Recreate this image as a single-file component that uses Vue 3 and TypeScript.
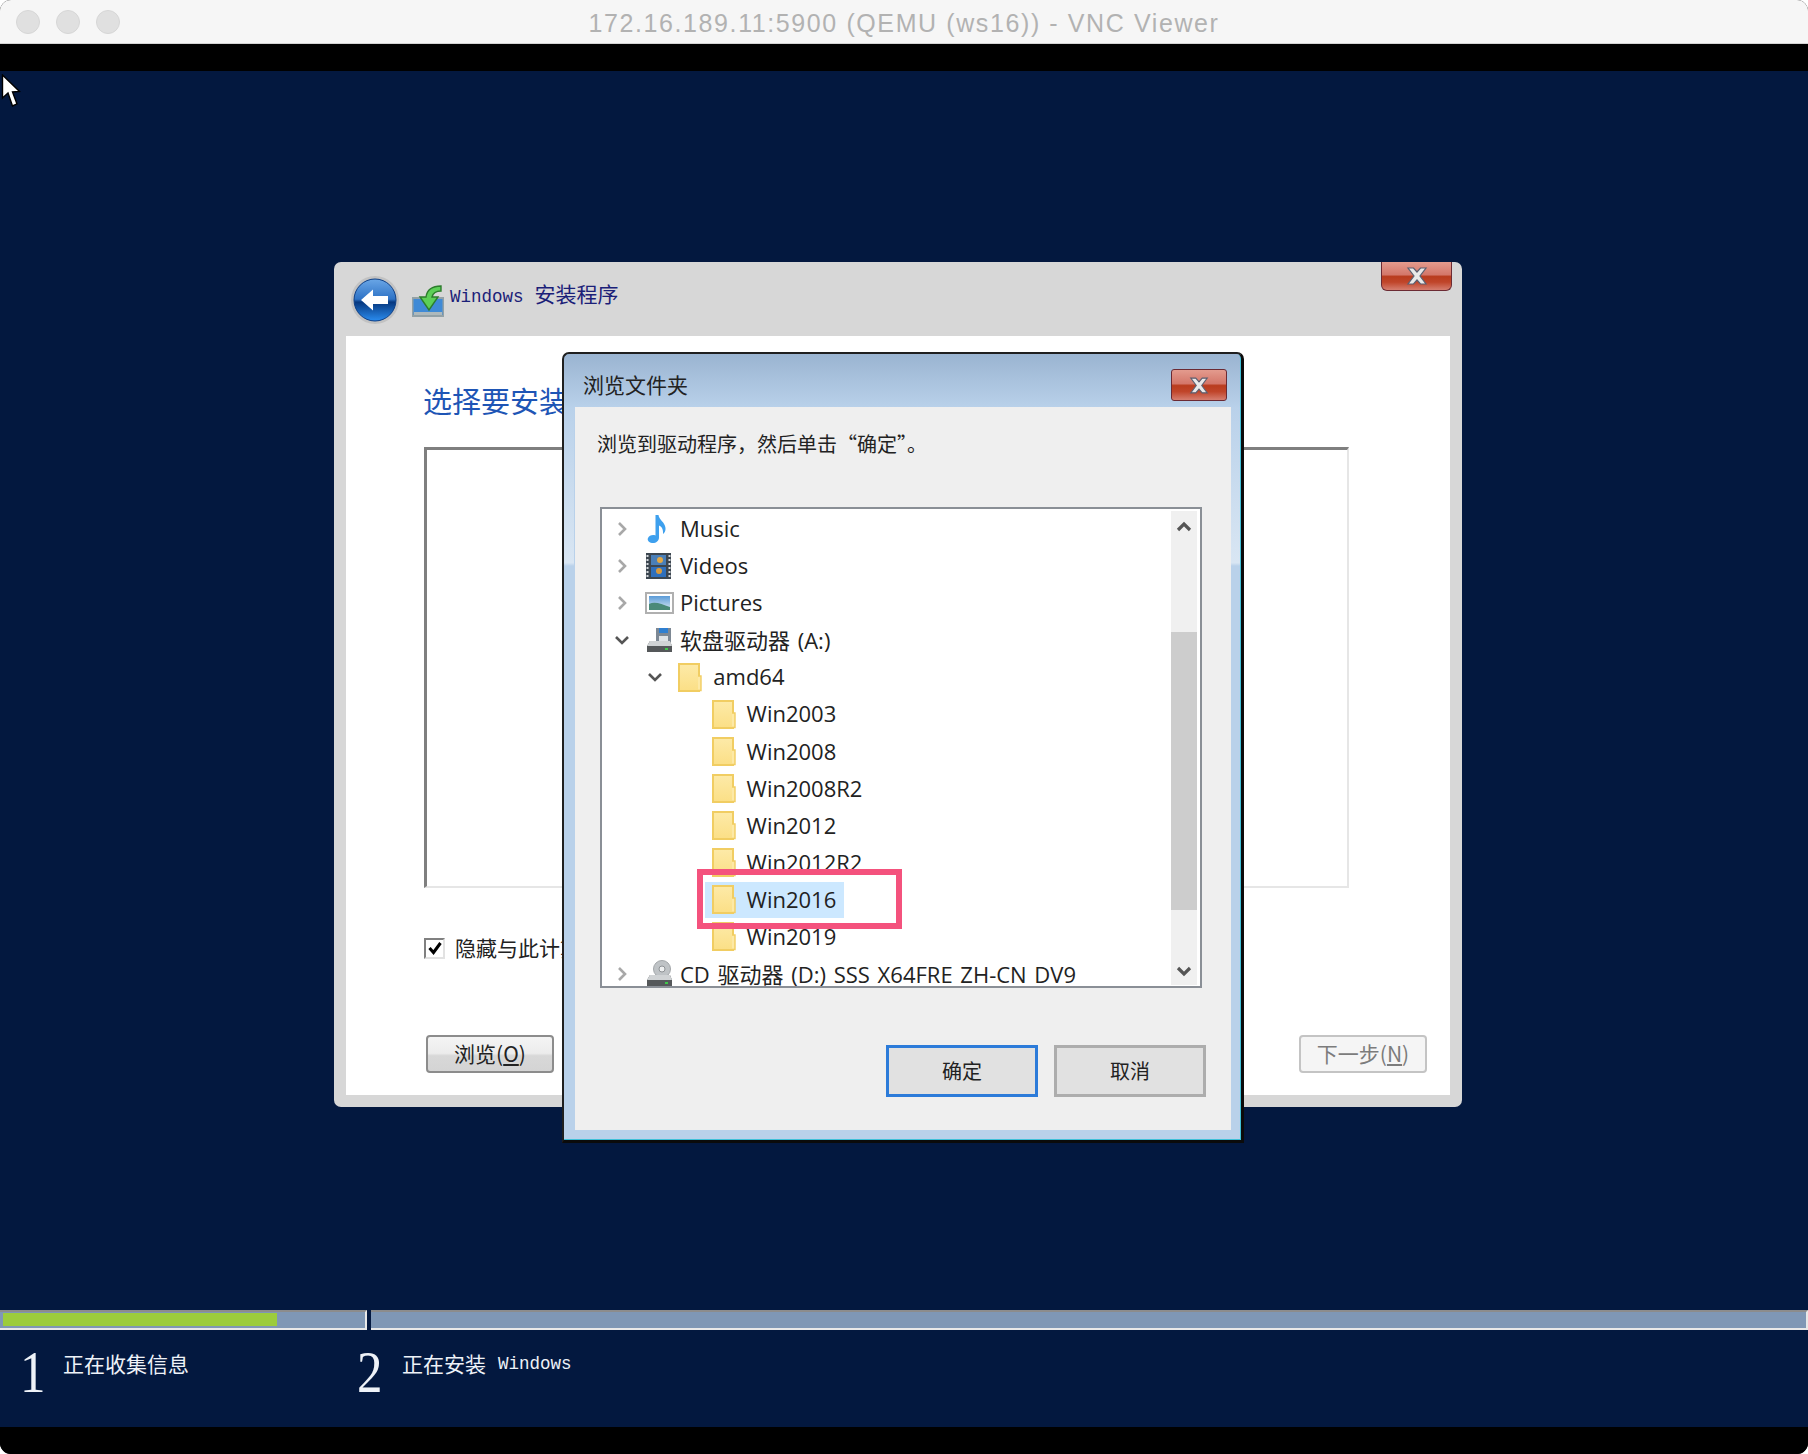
<script setup lang="ts">
interface TreeRow {
  label: string
  depth: number
  icon: 'music' | 'film' | 'picture' | 'floppy' | 'cd' | 'folder'
  arrow?: 'closed' | 'open'
  selected?: boolean
}

const rows: TreeRow[] = [
  { label: 'Music', depth: 0, icon: 'music', arrow: 'closed' },
  { label: 'Videos', depth: 0, icon: 'film', arrow: 'closed' },
  { label: 'Pictures', depth: 0, icon: 'picture', arrow: 'closed' },
  { label: '软盘驱动器 (A:)', depth: 0, icon: 'floppy', arrow: 'open' },
  { label: 'amd64', depth: 1, icon: 'folder', arrow: 'open' },
  { label: 'Win2003', depth: 2, icon: 'folder' },
  { label: 'Win2008', depth: 2, icon: 'folder' },
  { label: 'Win2008R2', depth: 2, icon: 'folder' },
  { label: 'Win2012', depth: 2, icon: 'folder' },
  { label: 'Win2012R2', depth: 2, icon: 'folder' },
  { label: 'Win2016', depth: 2, icon: 'folder', selected: true },
  { label: 'Win2019', depth: 2, icon: 'folder' },
  { label: 'CD 驱动器 (D:) SSS X64FRE ZH-CN DV9', depth: 0, icon: 'cd', arrow: 'closed' },
]
</script>

<template>
  <div class="screen">
    <header class="titlebar">
      <div class="lights"><i></i><i></i><i></i></div>
      <span class="titlebar-text">172.16.189.11:5900 (QEMU (ws16)) - VNC Viewer</span>
    </header>
    <div class="letterbox"></div>

    <main class="desktop">
      <svg class="cursor" width="20" height="36" viewBox="0 0 20 36">
        <path d="M1.5 1 L1.5 24 L7 19 L11.5 32 L16 30 L11.5 18 L18.5 17.5 Z" fill="#fff" stroke="#000" stroke-width="1.4" />
      </svg>

      <section class="installer">
        <div class="installer-head">
          <svg class="back" width="48" height="48" viewBox="0 0 48 48">
            <defs>
              <linearGradient id="backFill" x1="0" y1="0" x2="0" y2="1">
                <stop offset="0" stop-color="#6aa6e6" />
                <stop offset="0.48" stop-color="#2e73c6" />
                <stop offset="0.55" stop-color="#07387f" />
                <stop offset="1" stop-color="#2a8df0" />
              </linearGradient>
            </defs>
            <circle cx="24" cy="24" r="24" fill="#c2c2c2" />
            <circle cx="24" cy="24" r="21" fill="url(#backFill)" stroke="#0e3f86" />
            <path d="M10 24 L22 13.5 V20 H37 V28 H22 V34.5 Z" fill="#fff" />
          </svg>
          <svg class="setup-icon" width="32" height="32" viewBox="0 0 32 32">
            <rect x="0.5" y="13" width="31" height="18" fill="#3f8ad6" stroke="#93a1a6" stroke-width="2" />
            <rect x="2" y="27" width="28" height="3" fill="#aeb9bc" />
            <path d="M29 1 C20 1 15 5 14 12 L8 12 L17 25 L26 12 L20 12 C21 8 24 6 29 6 Z" fill="#5ccf57" stroke="#2c7d2c" stroke-width="1.4" />
          </svg>
          <div class="installer-title">
            <span class="latin">Windows</span><span class="cjk">安装程序</span>
          </div>
          <button class="close close-top">
            <svg width="24" height="18" viewBox="0 0 24 18">
              <path d="M3 1 H8.5 L12 5 L15.5 1 H21 L15 9 L21 17 H15.5 L12 13 L8.5 17 H3 L9 9 Z" fill="#e9e9e9" stroke="#5b5f70" stroke-width="1.2" />
            </svg>
          </button>
        </div>

        <div class="installer-body">
          <h1 class="heading">选择要安装的驱动程序</h1>
          <div class="driver-list"></div>
          <label class="hide-row">
            <span class="checkbox">
              <svg width="16" height="16" viewBox="0 0 16 16">
                <path d="M2.5 8 L6.5 12.5 L13.5 3" fill="none" stroke="#000" stroke-width="3" />
              </svg>
            </span>
            <span class="hide-label">隐藏与此计算机上的硬件不兼容的驱动程序</span>
          </label>
          <div class="installer-actions">
            <button class="setup-btn">浏览(<u>O</u>)</button>
            <button class="setup-btn disabled">下一步(<u>N</u>)</button>
          </div>
        </div>
      </section>

      <section class="dialog">
        <div class="dialog-head">
          <span class="dialog-title">浏览文件夹</span>
          <button class="close close-dialog">
            <svg width="22" height="17" viewBox="0 0 24 18">
              <path d="M3 1 H8.5 L12 5 L15.5 1 H21 L15 9 L21 17 H15.5 L12 13 L8.5 17 H3 L9 9 Z" fill="#e9e9e9" stroke="#5b5f70" stroke-width="1.2" />
            </svg>
          </button>
        </div>
        <div class="dialog-body">
          <p class="dialog-desc">浏览到驱动程序，然后单击“确定”。</p>
          <div class="tree">
            <ul class="tree-list">
              <li v-for="row in rows" :key="row.label" class="tree-row" :style="{ paddingLeft: row.depth * 33.3 + 'px' }">
                <span class="arrow">
                  <svg v-if="row.arrow === 'closed'" width="12" height="16" viewBox="0 0 12 16">
                    <path d="M3 2 L9 8 L3 14" fill="none" stroke="#a8a8a8" stroke-width="2.6" />
                  </svg>
                  <svg v-else-if="row.arrow === 'open'" width="16" height="12" viewBox="0 0 16 12">
                    <path d="M2 3 L8 9 L14 3" fill="none" stroke="#555" stroke-width="2.6" />
                  </svg>
                </span>
                <span class="item" :class="{ selected: row.selected }">
                  <span class="icon">
                    <svg v-if="row.icon === 'folder'" class="folder" width="24" height="29" viewBox="0 0 24 29">
                      <defs>
                        <linearGradient id="folderFill" x1="0" y1="0" x2="0" y2="1">
                          <stop offset="0" stop-color="#fdeaa8" />
                          <stop offset="1" stop-color="#fbdf86" />
                        </linearGradient>
                      </defs>
                      <rect x="1" y="1" width="20" height="27" fill="url(#folderFill)" stroke="#f1cd62" stroke-width="2" />
                      <path d="M20 27.5 H23 V13 H20" fill="#fde9a6" stroke="#f1cd62" stroke-width="1.4" />
                    </svg>
                    <svg v-else-if="row.icon === 'music'" width="28" height="30" viewBox="0 0 28 30">
                      <path d="M10.5 1 H13.5 C14 6 20 8 20.5 14 C20.8 17 19.5 19 18 20 C18.5 15 16.5 12.5 14 11.5 V23.5 C14 27 10.5 29.5 7 29 C3.5 28.5 2 26 3 24 C4 21.5 7.5 20.5 10.5 21.5 Z" fill="#3ea0ee" />
                    </svg>
                    <svg v-else-if="row.icon === 'film'" width="28" height="28" viewBox="0 0 28 28">
                      <rect x="1" y="1" width="25" height="26" fill="#3c4650" />
                      <rect x="6" y="3" width="15" height="10" fill="#4a7fb8" />
                      <rect x="6" y="15" width="15" height="10" fill="#2f70bd" />
                      <circle cx="15" cy="8" r="3" fill="#e3a845" />
                      <circle cx="14" cy="19" r="3" fill="#d99a3c" />
                      <path d="M2.5 3 V25 M24.5 3 V25" stroke="#d4d8dc" stroke-width="2" stroke-dasharray="2 2" />
                    </svg>
                    <svg v-else-if="row.icon === 'picture'" width="29" height="22" viewBox="0 0 29 22">
                      <defs>
                        <linearGradient id="skyFill" x1="0" y1="0" x2="0" y2="1">
                          <stop offset="0" stop-color="#5a9bd8" />
                          <stop offset="1" stop-color="#dbe9f2" />
                        </linearGradient>
                      </defs>
                      <rect x="1" y="1" width="27" height="20" fill="#fff" stroke="#b0b0b0" stroke-width="2" />
                      <rect x="4" y="4" width="21" height="14" fill="url(#skyFill)" />
                      <path d="M4 12 C10 9 16 12 25 15 V18 H4 Z" fill="#4a8a78" />
                    </svg>
                    <svg v-else-if="row.icon === 'floppy'" width="28" height="26" viewBox="0 0 28 26">
                      <rect x="11" y="1" width="15" height="14" fill="#7d8894" />
                      <rect x="14" y="1" width="9" height="5" fill="#2f7fd0" />
                      <rect x="14" y="9" width="9" height="6" fill="#dfe3e6" />
                      <path d="M5 14 H25 L27 19 V25 H2 V19 Z" fill="#55585a" />
                      <path d="M5 14 H25 L27 19 H2 Z" fill="#d0d3d5" />
                      <rect x="20" y="21" width="3" height="2" fill="#3fc84a" />
                    </svg>
                    <svg v-else width="28" height="27" viewBox="0 0 28 27">
                      <circle cx="17" cy="9" r="8.5" fill="#bfc3c6" stroke="#a3a7aa" />
                      <circle cx="17" cy="9" r="3" fill="#eef0f1" stroke="#8e9295" />
                      <path d="M5 15 H25 L27 20 V26 H2 V20 Z" fill="#55585a" />
                      <path d="M5 15 H25 L27 20 H2 Z" fill="#d0d3d5" />
                      <rect x="20" y="22" width="3" height="2" fill="#3fc84a" />
                    </svg>
                  </span>
                  <span class="label">{{ row.label }}</span>
                </span>
              </li>
            </ul>
            <div class="scrollbar">
              <div class="scroll-btn up">
                <svg width="16" height="12" viewBox="0 0 16 12"><path d="M2 10 L8 4 L14 10" fill="none" stroke="#555" stroke-width="3.2" /></svg>
              </div>
              <div class="thumb"></div>
              <div class="scroll-btn down">
                <svg width="16" height="12" viewBox="0 0 16 12"><path d="M2 2 L8 8 L14 2" fill="none" stroke="#555" stroke-width="3.2" /></svg>
              </div>
            </div>
            <div class="mark"></div>
          </div>
          <div class="dialog-actions">
            <button class="dlg-btn primary">确定</button>
            <button class="dlg-btn">取消</button>
          </div>
        </div>
      </section>

      <footer class="progress-area">
        <div class="progress">
          <div class="segment first"><div class="fill"></div></div>
          <div class="segment second"></div>
        </div>
        <div class="steps">
          <div class="step">
            <span class="num">1</span>
            <span class="step-text">正在收集信息</span>
          </div>
          <div class="step">
            <span class="num">2</span>
            <span class="step-text">正在安装<span class="latin">Windows</span></span>
          </div>
        </div>
      </footer>
    </main>

    <div class="letterbox"></div>
  </div>
</template>

<style>
html,
body {
  margin: 0;
  background: #fff;
}
</style>

<style scoped>
.screen {
  width: 1808px;
  height: 1454px;
  display: flex;
  flex-direction: column;
  overflow: hidden;
  border-radius: 11px;
  background: #000;
  font-family: "Noto Sans CJK SC", sans-serif;
}
.titlebar {
  height: 43px;
  flex: none;
  display: flex;
  align-items: center;
  justify-content: center;
  position: relative;
  background: #f6f6f6;
  border-bottom: 1px solid #d4d4d4;
}
.lights {
  position: absolute;
  left: 16px;
  top: 10px;
  display: flex;
  gap: 16px;
}
.lights i {
  width: 22px;
  height: 22px;
  border-radius: 50%;
  background: #e0e0e0;
  border: 1px solid #d6d6d6;
}
.titlebar-text {
  margin-top: 4px;
  font-family: "Liberation Sans", sans-serif;
  font-size: 25px;
  letter-spacing: 1.6px;
  color: #b2b2b2;
}
.letterbox {
  height: 27px;
  flex: none;
  background: #000;
}
.desktop {
  flex: 1;
  position: relative;
  display: flex;
  flex-direction: column;
  background: #03183f;
}
.cursor {
  position: absolute;
  left: 1px;
  top: 3px;
}

/* setup window behind the dialog */
.installer {
  position: absolute;
  left: 334px;
  top: 191px;
  width: 1128px;
  height: 845px;
  box-sizing: border-box;
  padding: 0 12px 12px;
  display: flex;
  flex-direction: column;
  background: #d7d7d7;
  border-radius: 7px;
}
.installer-head {
  height: 74px;
  flex: none;
  display: flex;
  align-items: center;
  padding-left: 5px;
  position: relative;
}
.back {
  margin-top: 2px;
}
.setup-icon {
  margin-left: 13px;
  margin-top: 4px;
}
.installer-title {
  margin-left: 6px;
  margin-top: -12px;
  color: #1b2078;
  display: flex;
  align-items: baseline;
  gap: 11px;
}
.latin {
  font-family: "Liberation Mono", monospace;
  font-size: 17.5px;
}
.cjk {
  font-size: 21px;
}
.close {
  display: flex;
  align-items: center;
  justify-content: center;
  padding: 0;
  box-sizing: border-box;
  border: 1px solid #6b2a33;
  background: linear-gradient(#e39b8e 0%, #d4776a 45%, #b93c1e 52%, #c0452a 72%, #d67e70 100%);
}
.close-top {
  position: absolute;
  right: -2px;
  top: 0;
  width: 71px;
  height: 29px;
  border-top: 0;
  border-radius: 0 0 6px 6px;
}
.installer-body {
  flex: 1;
  background: #fff;
  padding: 44px 23px 0 77px;
}
.heading {
  width: 150px;
  margin: 0;
  overflow: hidden;
  white-space: nowrap;
  font-size: 29px;
  line-height: 40px;
  font-weight: 400;
  color: #1e55b5;
}
.driver-list {
  margin-top: 27px;
  margin-left: 1px;
  width: 925px;
  height: 441px;
  box-sizing: border-box;
  border-style: solid;
  border-width: 3px 2px 2px 3px;
  border-color: #7f7f7f #e6e6e6 #e6e6e6 #7f7f7f;
}
.hide-row {
  margin-top: 49px;
  margin-left: 1px;
  display: flex;
  align-items: center;
  gap: 10px;
  height: 22px;
  font-size: 21px;
  color: #222;
}
.hide-label {
  width: 120px;
  overflow: hidden;
  white-space: nowrap;
  margin-top: -2px;
}
.checkbox {
  width: 21px;
  height: 21px;
  box-sizing: border-box;
  display: flex;
  align-items: center;
  justify-content: center;
  border-style: solid;
  border-width: 2px;
  border-color: #808080 #e2e2e2 #e2e2e2 #808080;
}
.installer-actions {
  margin-top: 76px;
  display: flex;
  justify-content: space-between;
  padding-left: 3px;
}
.setup-btn {
  width: 128px;
  height: 38px;
  padding: 0 0 2px;
  box-sizing: border-box;
  border: 2px solid #8c8c8c;
  border-radius: 4px;
  background: linear-gradient(#f4f4f4, #ececec 48%, #d8d8d8 55%, #d4d4d4);
  font-family: inherit;
  font-size: 21px;
  line-height: 30px;
  color: #222;
}
.setup-btn.disabled {
  border-color: #c4c4c4;
  background: #f5f5f5;
  color: #7c7c7c;
}

/* browse dialog */
.dialog {
  position: absolute;
  left: 562px;
  top: 281px;
  width: 682px;
  height: 791px;
  box-sizing: border-box;
  display: flex;
  flex-direction: column;
  padding: 0 10px 10px 11px;
  border-style: solid;
  border-width: 2px 3px 3px 2px;
  border-color: #1f1f1f #0b0b0b #0b0b0b #1f1f1f;
  border-radius: 7px 7px 0 0;
  background: linear-gradient(#9ab4d1 0, #b9d1ea 54px);
  box-shadow: inset -1px -1px 0 #3fc0d8;
}
.dialog::before,
.dialog::after {
  content: "";
  position: absolute;
  top: 53px;
  width: 10px;
  height: 159px;
  background: linear-gradient(#b9d1ea, #d9e6f3 98%, #b9d1ea);
}
.dialog::before {
  left: 0;
}
.dialog::after {
  right: 1px;
}
.dialog-head {
  height: 53px;
  flex: none;
  display: flex;
  align-items: center;
  position: relative;
}
.dialog-title {
  margin-left: 8px;
  margin-top: 7px;
  font-size: 21px;
  color: #222;
}
.close-dialog {
  position: absolute;
  right: 4px;
  top: 15px;
  width: 56px;
  height: 32px;
  border-radius: 3px;
}
.dialog-body {
  flex: 1;
  position: relative;
  z-index: 1;
  background: #efefef;
  padding-top: 22px;
  padding-left: 22px;
}
.dialog-desc {
  margin: 0;
  font-size: 20px;
  line-height: 30px;
  color: #222;
}
.tree {
  margin-top: 48px;
  margin-left: 3px;
  width: 602px;
  height: 481px;
  box-sizing: border-box;
  display: flex;
  position: relative;
  overflow: hidden;
  background: #fff;
  border: 2px solid #8a8f96;
}
.tree-list {
  flex: 1;
  margin: 0;
  padding: 1.5px 0 0;
  list-style: none;
  min-width: 0;
}
.tree-row {
  height: 37.08px;
  display: flex;
  align-items: center;
  font-family: "Open Sans", "Noto Sans CJK SC", sans-serif;
  font-size: 22px;
  word-spacing: 2px;
  color: #222;
  white-space: nowrap;
}
.arrow {
  width: 22px;
  margin-left: 9px;
  margin-right: 12px;
  flex: none;
  display: flex;
  justify-content: center;
  align-items: center;
}
.item {
  display: flex;
  align-items: center;
  height: 36px;
}
.item.selected {
  margin-left: -7px;
  padding-left: 7px;
  padding-right: 8px;
  background: #cce8ff;
}
.icon {
  width: 35px;
  flex: none;
  display: flex;
  align-items: center;
}
.label {
  margin-top: -2px;
}
.scrollbar {
  width: 26px;
  flex: none;
  margin: 2px 3px 1px 0;
  display: flex;
  flex-direction: column;
  justify-content: space-between;
  background: #f0f0f0;
}
.scroll-btn {
  height: 33px;
  display: flex;
  align-items: center;
  justify-content: center;
}
.scroll-btn.up {
  padding-bottom: 3px;
  box-sizing: border-box;
}
.scroll-btn.down {
  padding-top: 6px;
  box-sizing: border-box;
}
.thumb {
  height: 278px;
  margin-top: 88px;
  margin-bottom: auto;
  background: #cdcdcd;
}
.mark {
  position: absolute;
  left: 95px;
  top: 360px;
  width: 205px;
  height: 60px;
  box-sizing: border-box;
  border: 6px solid #f4527d;
}
.dialog-actions {
  margin-top: 57px;
  margin-left: 289px;
  display: flex;
  gap: 16px;
}
.dlg-btn {
  width: 152px;
  height: 52px;
  box-sizing: border-box;
  padding: 0 0 2px;
  border: 3px solid #adadad;
  background: #e1e1e1;
  font-family: inherit;
  font-size: 20px;
  color: #222;
}
.dlg-btn.primary {
  border-color: #2c7bd9;
}

/* progress strip along the bottom */
.progress-area {
  margin-top: auto;
  height: 117px;
  flex: none;
}
.progress {
  height: 20px;
  display: flex;
  gap: 4px;
}
.segment {
  box-sizing: border-box;
  background: #7f97b5;
  border-style: solid;
  border-width: 2px 2px 2px 0;
  border-color: #8c8c8c #e8e8e8 #e8e8e8 #8c8c8c;
}
.segment.first {
  width: 367px;
  padding: 1px 0 2px 3px;
}
.segment.second {
  flex: 1;
}
.fill {
  width: 274px;
  height: 100%;
  background: #9ccc3c;
}
.steps {
  display: flex;
  padding-left: 20px;
  margin-top: 12px;
}
.step {
  width: 337px;
  display: flex;
  align-items: flex-start;
  color: #eef2f8;
}
.num {
  width: 43px;
  font-family: "Liberation Serif", serif;
  font-size: 60px;
  line-height: 60px;
  font-weight: 400;
  transform: scaleX(0.85);
  transform-origin: left center;
}
.step:nth-child(2) .num {
  width: 45px;
}
.step-text {
  font-size: 21px;
  line-height: 30px;
  margin-top: 6px;
  display: flex;
  align-items: flex-start;
  gap: 12px;
}
.step-text .latin {
  padding-top: 1px;
}
</style>
